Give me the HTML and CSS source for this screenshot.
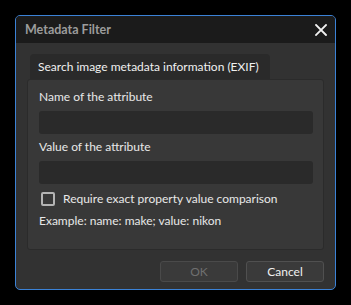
FILE: index.html
```html
<!DOCTYPE html>
<html>
<head>
<meta charset="utf-8">
<link rel="stylesheet" href="styles.css">
</head>
<body>
<div class="dialog">
  <div class="titlebar">
    <span class="title">Metadata Filter</span>
    <svg class="close" width="12" height="12" viewBox="0 0 12 12"><path d="M1 1L11 11M11 1L1 11" stroke="#f2f2f2" stroke-width="1.8" stroke-linecap="square"/></svg>
  </div>
  <div class="content">
    <div class="tab">Search image metadata information (EXIF)</div>
    <div class="group">
      <div class="label">Name of the attribute</div>
      <div class="input"></div>
      <div class="label second">Value of the attribute</div>
      <div class="input"></div>
      <div class="check-row">
        <span class="checkbox"></span>
        <span class="check-text">Require exact property value comparison</span>
      </div>
      <div class="example">Example: name: make; value: nikon</div>
    </div>
    <div class="buttons">
      <div class="btn disabled">OK</div>
      <div class="btn">Cancel</div>
    </div>
  </div>
</div>
</body>
</html>
```
FILE: styles.css
```css
html, body {
  margin: 0;
  padding: 0;
  background: #000;
}
body {
  padding: 15px 0 0 15px;
  font-family: Lato, "Noto Sans", sans-serif;
  font-size: 12px;
  color: #e8e8e8;
}
.dialog {
  width: 319px;
  height: 273px;
  border: 1px solid #3b82d6;
  border-radius: 5px;
  background: #323232;
  overflow: hidden;
  display: flex;
  flex-direction: column;
}
.titlebar {
  height: 27px;
  background: #1b1b1b;
  display: flex;
  align-items: center;
  justify-content: space-between;
  padding: 0 8px 0 9px;
  flex: none;
}
.title {
  font-weight: bold;
  font-size: 12.5px;
  color: #9c9c9c;
}
.close {
  display: block;
  margin-top: 1px;
}
.content {
  padding: 11px 11px 0 11px;
}
.tab {
  margin-left: 3px;
  width: 224px;
  height: 25px;
  padding: 0 8px;
  line-height: 25px;
  background: #2a2a2a;
  border-radius: 4px 4px 0 0;
  color: #f0f0f0;
  white-space: nowrap;
}
.group {
  background: #383838;
  border: 1px solid #2b2b2b;
  border-radius: 3px;
  height: 160px;
  box-sizing: content-box;
  padding: 9px 10px 0 11px;
}
.label {
  line-height: 16px;
  height: 16px;
}
.label.second {
  margin-top: 5px;
}
.input {
  margin-top: 6px;
  height: 23px;
  background: #2a2a2a;
  border-radius: 3px;
}
.check-row {
  display: flex;
  align-items: center;
  margin-top: 8px;
  height: 14px;
  line-height: 16px;
}
.checkbox {
  width: 10px;
  height: 10px;
  border: 2px solid #b4b4b4;
  border-radius: 2px;
  margin-left: 2px;
  margin-right: 8px;
  flex: none;
}
.example {
  margin-top: 7px;
  line-height: 16px;
}
.buttons {
  display: flex;
  justify-content: flex-end;
  gap: 8px;
  margin-top: 11px;
}
.btn {
  width: 76px;
  height: 19px;
  border: 1px solid #505050;
  border-radius: 3px;
  background: #3a3a3a;
  text-align: center;
  line-height: 19px;
  color: #f0f0f0;
}
.btn.disabled {
  color: #6f6f6f;
  border-color: #4a4a4a;
}
```
